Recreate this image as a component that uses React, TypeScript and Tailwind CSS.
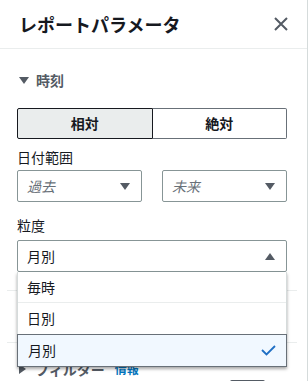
import React from "react";

function Caret({ up = false, right = false }: { up?: boolean; right?: boolean }) {
  const pts = up ? "0,7 5,0 10,7" : right ? "0,0 7,5 0,10" : "0,0 10,0 5,7";
  return (
    <svg width={right ? 7 : 10} height={right ? 10 : 7} viewBox={right ? "0 0 7 10" : "0 0 10 7"} className="shrink-0">
      <polygon points={pts} fill="#545b64" />
    </svg>
  );
}

function Select({ text, placeholder = false, up = false }: { text: string; placeholder?: boolean; up?: boolean }) {
  return (
    <div className="flex h-[32px] items-center justify-between rounded-[2px] border border-[#879596] bg-white pl-[9px] pr-[11px]">
      <span className={placeholder ? "text-[14px] italic text-[#687078]" : "text-[14px] text-[#16191f]"}>{text}</span>
      <Caret up={up} />
    </div>
  );
}

export default function App() {
  return (
    <div
      className="relative h-[381px] w-[308px] overflow-hidden border-r border-[#d5dbdb] bg-white text-[#16191f]"
      style={{ fontFamily: '"Noto Sans CJK JP", "Noto Sans", sans-serif' }}
    >
      {/* HEADER */}
      <div className="flex h-[49px] items-center justify-between border-b border-[#eaeded] pl-[19px] pr-[18px]">
        <h2 className="text-[18px] font-bold leading-[24px]">レポートパラメータ</h2>
        <svg width="16" height="16" viewBox="0 0 16 16">
          <path d="M2 2 L14 14 M14 2 L2 14" stroke="#545b64" strokeWidth="2" />
        </svg>
      </div>

      {/* TIME SECTION */}
      <div className="pl-[17px] pr-[20px] pt-[21px]">
        <div className="flex h-[20px] items-center gap-[7px] pl-[2px]">
          <Caret />
          <span className="text-[14px] font-bold leading-[20px] text-[#545b64]">時刻</span>
        </div>

        <div className="mt-[18px] flex h-[31px]">
          <div className="flex flex-1 items-center justify-center rounded-l-[2px] border border-[#16191f] bg-[#eaeded] text-[14px] font-bold">
            相対
          </div>
          <div className="flex flex-1 items-center justify-center rounded-r-[2px] border border-l-0 border-[#687078] bg-white text-[14px] font-bold">
            絶対
          </div>
        </div>

        <div className="mt-[8px] text-[14px] leading-[20px]">日付範囲</div>
        <div className="mt-[3px] flex gap-[20px]">
          <div className="flex-1">
            <Select text="過去" placeholder />
          </div>
          <div className="flex-1">
            <Select text="未来" placeholder />
          </div>
        </div>

        <div className="mt-[13px] text-[14px] leading-[20px]">粒度</div>
        <div className="relative mt-[5px]">
          <Select text="月別" up />

          {/* OPEN DROPDOWN */}
          <div className="absolute left-0 top-[32px] z-10 w-full border-x border-[#d5dbdb] bg-white shadow-[0_2px_3px_rgba(0,0,0,0.35)]">
            <div className="flex h-[31px] items-center border-b border-[#eaeded] pl-[9px] text-[14px]">毎時</div>
            <div className="flex h-[31px] items-center pl-[9px] text-[14px]">日別</div>
            <div className="-mx-px flex h-[33px] items-center justify-between border border-[#687078] bg-[#f1f8ff] pl-[10px] pr-[10px] text-[14px]">
              <span>月別</span>
              <svg width="15" height="11" viewBox="0 0 15 11">
                <polyline points="1,5 5.5,9.5 14,1" fill="none" stroke="#1f6fc4" strokeWidth="1.8" />
              </svg>
            </div>
          </div>
        </div>
      </div>

      {/* DIVIDER + HIDDEN SECTION */}
      <div className="ml-[7px] mr-[10px] mt-[18px] border-t border-[#eaeded]" />
      <div className="h-[51px]" />
      <div className="ml-[7px] mr-[10px] border-t border-[#eaeded]" />

      {/* FILTER SECTION */}
      <div className="pl-[19px] pr-[20px] pt-[16px]">
        <div className="flex h-[20px] items-center gap-[9px]">
          <Caret right />
          <span className="text-[14px] font-bold leading-[20px] text-[#545b64]">フィルター</span>
          <span className="ml-[1px] text-[12px] font-bold text-[#0073bb]">情報</span>
        </div>
        <div className="flex justify-end pr-[22px]">
          <div className="mt-[1px] h-[20px] w-[35px] rounded-t-[2px] border-t-2 border-[#545b64]" />
        </div>
      </div>
    </div>
  );
}
